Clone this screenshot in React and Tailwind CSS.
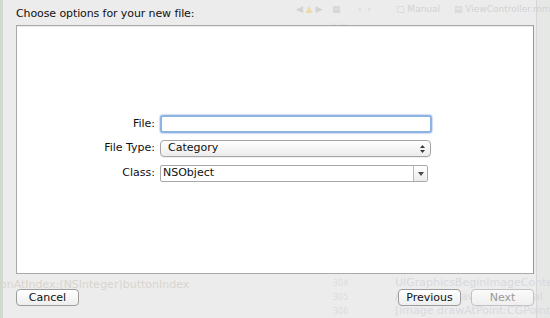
import React from "react";

function Stepper() {
  return (
    <svg width="7" height="10" viewBox="0 0 7 10" className="shrink-0">
      <path d="M3.5 1 L6 4 L1 4 Z" fill="#3a3a3a" />
      <path d="M3.5 9 L6 6 L1 6 Z" fill="#3a3a3a" />
    </svg>
  );
}

function DownTri() {
  return (
    <svg width="8" height="6" viewBox="0 0 8 6">
      <path d="M1 1 L7 1 L4 5 Z" fill="#4a4a4a" />
    </svg>
  );
}

export default function App() {
  return (
    <div
      className="relative w-[550px] h-[318px] overflow-hidden bg-[#ececec] text-[#111]"
      style={{ fontFamily: '"DejaVu Sans", "Liberation Sans", sans-serif' }}
    >
      {/* ghost background seen through the sheet */}
      <div className="absolute left-0 top-0 w-[3px] h-full bg-[#cfdccd]" />
      <div className="absolute right-0 top-0 w-[14px] h-full bg-[#e6e8e6] border-l border-[#d6d6d6]" />
      <div className="absolute left-[296px] top-[3px] flex items-center whitespace-nowrap text-[9px] leading-[12px] text-[#d2d2d2]">
        <span className="w-[36px]">◀ <span className="text-[#eed9a8]">▲</span> ▶</span>
        <span className="w-[26px]">▦</span>
        <span className="w-[38px]">‹ &nbsp;›</span>
        <span className="w-[58px]">▢ Manual</span>
        <span>▤ ViewController.mm</span>
      </div>
      <div className="absolute left-[330px] top-[19px] text-[7px] text-[#d8d8d8]">— —</div>
      <div className="absolute left-0 top-[277px] text-[11px] text-[#d9d4cc] whitespace-nowrap">
        onAtIndex:(NSInteger)buttonIndex
      </div>
      <div className="absolute left-[333px] top-[277px] flex flex-col text-[8px] leading-[14px] text-[#dcdcdc]">
        <span>304</span>
        <span>305</span>
        <span>306</span>
      </div>
      <div className="absolute left-[395px] top-[276px] flex flex-col text-[11px] leading-[14px] text-[#d7d9df] whitespace-nowrap">
        <span>UIGraphicsBeginImageContext</span>
        <span>// Pass 1: Draw the original</span>
        <span>[image drawAtPoint:CGPoint</span>
      </div>

      {/* sheet content */}
      <div className="relative flex flex-col pl-[16px] pt-[5px]">
        <div className="h-[17px] text-[11px] leading-[17px] tracking-[-0.1px]">
          Choose options for your new file:
        </div>
        <div className="mt-[3px] w-[518px] h-[249px] bg-white border border-[#a9a9a9] border-r-[#9a9a9a] shadow-[inset_0_1px_1px_rgba(0,0,0,0.08)]">
          <div className="mt-[89px] grid grid-cols-[138px_272px] gap-x-[5px] items-center text-[11px]">
            <div className="text-right pt-[1px]">File:</div>
            <div className="h-[18px] rounded-[3px] border-2 border-[#8db3e2] bg-white shadow-[0_0_1px_1px_rgba(120,160,220,0.35)]" />

            <div className="mt-[7px] text-right">File Type:</div>
            <div className="mt-[7px] w-[271px] h-[17px] rounded-[4px] border border-[#a5a5a5] bg-gradient-to-b from-white to-[#ececec] flex items-center justify-between pl-[7px] pr-[4px] shadow-[0_1px_0_rgba(0,0,0,0.06)]">
              <span>Category</span>
              <Stepper />
            </div>

            <div className="mt-[8px] text-right">Class:</div>
            <div className="mt-[8px] w-[268px] h-[17px] rounded-[2px] border border-[#a9a9a9] bg-white flex items-stretch">
              <div className="flex-1 flex items-center pl-[2px]">NSObject</div>
              <div className="w-[14px] border-l border-[#b9b9b9] bg-gradient-to-b from-white to-[#ececec] flex items-center justify-center rounded-r-[2px]">
                <DownTri />
              </div>
            </div>
          </div>
        </div>
        <div className="mt-[15px] flex text-[11px]">
          <button className="w-[63px] h-[17px] rounded-[4px] border border-[#9c9c9c] bg-gradient-to-b from-white to-[#eeeeee] leading-[15px]">
            Cancel
          </button>
          <div className="flex-1" />
          <button className="w-[63px] h-[17px] rounded-[4px] border border-[#9c9c9c] bg-gradient-to-b from-white to-[#eeeeee] leading-[15px]">
            Previous
          </button>
          <button className="ml-[10px] mr-[16px] w-[63px] h-[17px] rounded-[4px] border border-[#c2c2c2] bg-gradient-to-b from-[#fafafa] to-[#efefef] text-[#9a9a9a] leading-[15px]">
            Next
          </button>
        </div>
      </div>
    </div>
  );
}
